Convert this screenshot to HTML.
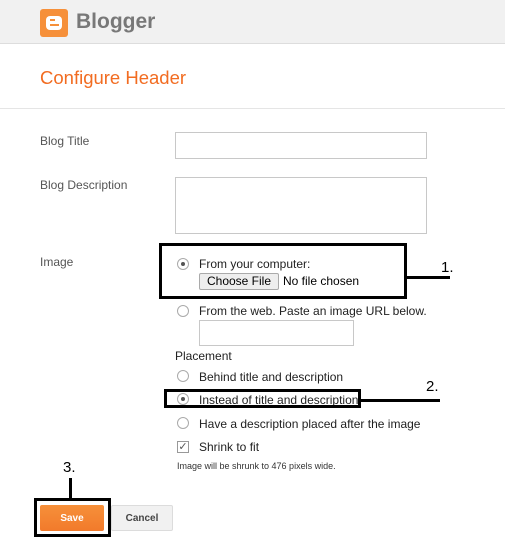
<!DOCTYPE html>
<html><head><style>
body{margin:0;width:505px;height:557px;background:#fff;position:relative;overflow:hidden;font-family:"Liberation Sans",Arial,sans-serif;}
.a{position:absolute;}
.lbl{font-size:12px;color:#555;}
.t{font-size:12px;color:#222;}
.in{position:absolute;border:1px solid #c8c8c8;background:#fff;box-sizing:border-box;}
.r{position:absolute;width:12px;height:12px;border:1px solid #aaa;border-radius:50%;box-sizing:border-box;background:#fff;}
.r.on::after{content:"";position:absolute;left:3px;top:3px;width:4px;height:4px;border-radius:50%;background:#555;}
.box{position:absolute;border:3px solid #000;box-sizing:border-box;}
.ln{position:absolute;background:#000;}
.num{position:absolute;font-size:15px;color:#000;}
</style></head><body>
<div class="a" style="left:0;top:0;width:505px;height:43px;background:#f1f1f1;border-bottom:1px solid #ddd;"></div>
<div class="a" style="left:40px;top:9px;width:28px;height:28px;background:#f6903a;border-radius:3px;"></div>
<div class="a" style="left:46px;top:16px;width:16px;height:14px;background:#fff;border-radius:4px;"></div>
<div class="a" style="left:50px;top:19px;width:5px;height:2px;background:#f6903a;"></div>
<div class="a" style="left:50px;top:24px;width:9px;height:2px;background:#f6903a;"></div>
<div class="a" style="left:76px;top:10px;font-size:21px;color:#787878;font-weight:600;">Blogger</div>
<div class="a" style="left:40px;top:67px;font-size:18.5px;color:#f26c21;">Configure Header</div>
<div class="a" style="left:0;top:108px;width:505px;height:1px;background:#e5e5e5;"></div>
<div class="a lbl" style="left:40px;top:134px;">Blog Title</div>
<div class="a lbl" style="left:40px;top:178px;">Blog Description</div>
<div class="a lbl" style="left:40px;top:255px;">Image</div>
<div class="in" style="left:175px;top:132px;width:252px;height:27px;"></div>
<div class="in" style="left:175px;top:177px;width:252px;height:57px;"></div>
<div class="r on" style="left:177px;top:258px;"></div>
<div class="a t" style="left:199px;top:257px;">From your computer:</div>
<div class="a" style="left:199px;top:273px;width:80px;height:17px;border:1px solid #aaa;background:#eee;box-sizing:border-box;border-radius:2px;font-size:12px;text-align:center;line-height:15px;color:#000;">Choose File</div>
<div class="a t" style="left:283px;top:274px;color:#000;">No file chosen</div>
<div class="box" style="left:159px;top:243px;width:248px;height:56px;"></div>
<div class="ln" style="left:405px;top:276px;width:45px;height:3px;"></div>
<div class="num" style="left:441px;top:259px;">1.</div>
<div class="r" style="left:177px;top:305px;"></div>
<div class="a t" style="left:199px;top:304px;">From the web. Paste an image URL below.</div>
<div class="in" style="left:199px;top:320px;width:155px;height:26px;"></div>
<div class="a t" style="left:175px;top:349px;">Placement</div>
<div class="r" style="left:177px;top:370px;"></div>
<div class="a t" style="left:199px;top:370px;">Behind title and description</div>
<div class="r on" style="left:177px;top:393px;"></div>
<div class="a t" style="left:199px;top:393px;">Instead of title and description</div>
<div class="box" style="left:164px;top:389px;width:197px;height:19px;"></div>
<div class="ln" style="left:360px;top:399px;width:80px;height:3px;"></div>
<div class="num" style="left:426px;top:378px;">2.</div>
<div class="r" style="left:177px;top:417px;"></div>
<div class="a t" style="left:199px;top:417px;">Have a description placed after the image</div>
<div class="a" style="left:177px;top:441px;width:12px;height:12px;border:1px solid #999;box-sizing:border-box;background:#fff;font-size:11px;line-height:10px;color:#555;text-align:center;">✓</div>
<div class="a t" style="left:199px;top:440px;">Shrink to fit</div>
<div class="a" style="left:177px;top:461px;font-size:9px;color:#333;">Image will be shrunk to 476 pixels wide.</div>
<div class="num" style="left:63px;top:459px;">3.</div>
<div class="ln" style="left:69px;top:478px;width:3px;height:21px;"></div>
<div class="box" style="left:34px;top:498px;width:77px;height:39px;"></div>
<div class="a" style="left:40px;top:505px;width:64px;height:26px;background:linear-gradient(#f6903a,#f27a2b);border-radius:2px;color:#fff;font-size:10px;font-weight:bold;text-align:center;line-height:27px;">Save</div>
<div class="a" style="left:111px;top:505px;width:62px;height:26px;background:#f1f1f1;border:1px solid #dcdcdc;box-sizing:border-box;border-radius:2px;color:#444;font-size:10px;font-weight:bold;text-align:center;line-height:25px;">Cancel</div>
</body></html>
